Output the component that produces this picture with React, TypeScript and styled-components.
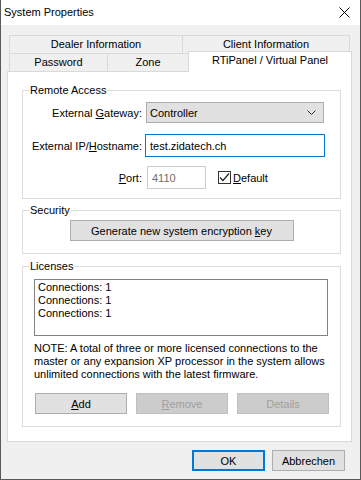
import React, { useState } from "react";
import styled, { createGlobalStyle } from "styled-components";

const GlobalStyle = createGlobalStyle`
  html, body {
    margin: 0;
    padding: 0;
    background: #ffffff;
  }
  body {
    font-family: "Liberation Sans", Arial, sans-serif;
    font-size: 11px;
    color: #000;
  }
  * {
    box-sizing: border-box;
  }
`;

const Window = styled.div`
  width: 361px;
  height: 480px;
  border: 1px solid #5a5a5a;
  border-top: none;
  background: #f0f0f0;
  display: flex;
  flex-direction: column;
`;

const TitleBar = styled.div`
  height: 25px;
  background: #ffffff;
  display: flex;
  align-items: center;
  justify-content: space-between;
  padding: 0 10px 1px 3px;
`;

const Title = styled.span`
  font-size: 11px;
  line-height: 16px;
`;

const Body = styled.div`
  padding: 10px 8px 0 6px;
  display: flex;
  flex-direction: column;
`;

const TabStrip = styled.div`
  padding-left: 2px;
  display: flex;
  flex-direction: column;
`;

const TabRow = styled.div`
  display: flex;
  height: 18px;
  align-items: flex-start;
`;

const Tab = styled.div<{ $w: number; $active?: boolean; $first?: boolean }>`
  width: ${(p) => p.$w}px;
  height: ${(p) => (p.$active ? 21 : 18)}px;
  margin-top: ${(p) => (p.$active ? -2 : 0)}px;
  margin-left: ${(p) => (p.$first ? 0 : -1)}px;
  border: 1px solid #d9d9d9;
  border-bottom: none;
  background: ${(p) => (p.$active ? "#ffffff" : "#f0f0f0")};
  position: relative;
  z-index: ${(p) => (p.$active ? 2 : 1)};
  text-align: center;
  line-height: 17px;
  white-space: nowrap;
`;

const Panel = styled.div`
  width: 345px;
  height: 371px;
  background: #ffffff;
  border: 1px solid #d9d9d9;
  padding: 10px 10px 0 14px;
  display: flex;
  flex-direction: column;
`;

const Group = styled.fieldset<{ $top?: number }>`
  margin: ${(p) => p.$top ?? 0}px 0 0 0;
  padding: 0;
  border: 1px solid #dcdcdc;
  min-width: 0;
`;

const Legend = styled.legend`
  margin-left: 6px;
  padding: 0 1px;
  line-height: 16px;
`;

const FormGrid = styled.div`
  display: grid;
  grid-template-columns: 119px auto;
  column-gap: 4px;
  align-items: center;
  padding: 4px 0 9px 0;
`;

const FieldLabel = styled.label<{ $mt?: number }>`
  text-align: right;
  white-space: nowrap;
  margin-top: ${(p) => p.$mt ?? 0}px;
`;

const Cell = styled.div<{ $mt?: number }>`
  display: flex;
  align-items: center;
  margin-top: ${(p) => p.$mt ?? 0}px;
`;

const Accel = styled.span`
  text-decoration: underline;
  text-underline-offset: 1px;
`;

const Select = styled.div`
  width: 178px;
  height: 21px;
  background: #e1e1e1;
  border: 1px solid #adadad;
  display: flex;
  align-items: center;
  justify-content: space-between;
  padding: 0 7px 0 3px;
`;

const TextInput = styled.div<{ $w: number; $shift?: number; $focus?: boolean; $disabled?: boolean }>`
  width: ${(p) => p.$w}px;
  height: 23px;
  margin-left: ${(p) => p.$shift ?? 0}px;
  border: 1px solid ${(p) => (p.$focus ? "#0078d7" : "#cccccc")};
  background: #ffffff;
  color: ${(p) => (p.$disabled ? "#6d6d6d" : "#000000")};
  display: flex;
  align-items: center;
  padding-left: 4px;
`;

const CheckWrap = styled.div`
  display: flex;
  align-items: center;
  margin-left: 12px;
  gap: 2px;
`;

const CheckBox = styled.div`
  width: 13px;
  height: 13px;
  border: 1px solid #333333;
  background: #ffffff;
  display: flex;
  align-items: center;
  justify-content: center;
`;

const Centered = styled.div`
  display: flex;
  justify-content: center;
  padding: 2px 0 12px 0;
`;

const Button = styled.button<{ $w: number; $disabled?: boolean; $default?: boolean }>`
  width: ${(p) => p.$w}px;
  height: 21px;
  padding: 0;
  font-family: inherit;
  font-size: 11px;
  background: ${(p) => (p.$disabled ? "#cccccc" : "#e1e1e1")};
  color: ${(p) => (p.$disabled ? "#a0a0a0" : "#000000")};
  border: ${(p) => (p.$default ? "2px solid #0078d7" : p.$disabled ? "1px solid #bfbfbf" : "1px solid #adadad")};
  line-height: 16px;
  cursor: default;
`;

const LicenseBody = styled.div`
  padding: 5px 0 12px 11px;
  display: flex;
  flex-direction: column;
`;

const ListBox = styled.div`
  width: 294px;
  height: 57px;
  border: 1px solid #828282;
  padding: 1px 3px;
  line-height: 13px;
`;

const Note = styled.p`
  margin: 6px 0 0 0;
  line-height: 13px;
  white-space: nowrap;
`;

const ButtonRow = styled.div`
  display: flex;
  gap: 9px;
  margin-top: 12px;
  padding-left: 1px;
`;

const Footer = styled.div`
  display: flex;
  justify-content: flex-end;
  gap: 7px;
  padding: 8px 7px 0 0;
`;

const CloseIcon = () => (
  <svg width="11" height="11" viewBox="0 0 11 11">
    <path d="M0.5 0.5 L10.5 10.5 M10.5 0.5 L0.5 10.5" stroke="#000" strokeWidth="1" fill="none" />
  </svg>
);

const Chevron = () => (
  <svg width="9" height="5" viewBox="0 0 9 5">
    <polyline points="0.5,0.5 4.5,4.5 8.5,0.5" stroke="#333" strokeWidth="1" fill="none" />
  </svg>
);

const Check = () => (
  <svg width="11" height="11" viewBox="0 0 11 11">
    <polyline points="1,5.5 4,8.5 10,1.5" stroke="#222" strokeWidth="1.2" fill="none" />
  </svg>
);

const App: React.FC = () => {
  const [checked] = useState(true);
  const licenses = ["Connections: 1", "Connections: 1", "Connections: 1"];

  return (
    <>
      <GlobalStyle />
      <Window>
        <TitleBar>
          <Title>System Properties</Title>
          <CloseIcon />
        </TitleBar>
        <Body>
          <TabStrip>
            <TabRow>
              <Tab $w={174} $first>Dealer Information</Tab>
              <Tab $w={168}>Client Information</Tab>
            </TabRow>
            <TabRow>
              <Tab $w={99} $first>Password</Tab>
              <Tab $w={82}>Zone</Tab>
              <Tab $w={164} $active>RTiPanel / Virtual Panel</Tab>
            </TabRow>
          </TabStrip>
          <Panel>
            <Group>
              <Legend>Remote Access</Legend>
              <FormGrid>
                <FieldLabel>
                  External <Accel>G</Accel>ateway:
                </FieldLabel>
                <Cell>
                  <Select>
                    <span>Controller</span>
                    <Chevron />
                  </Select>
                </Cell>
                <FieldLabel $mt={11}>
                  External IP/<Accel>H</Accel>ostname:
                </FieldLabel>
                <Cell $mt={11}>
                  <TextInput $w={180} $shift={-1} $focus>
                    test.zidatech.ch
                  </TextInput>
                </Cell>
                <FieldLabel $mt={9}>
                  <Accel>P</Accel>ort:
                </FieldLabel>
                <Cell $mt={9}>
                  <TextInput $w={59} $shift={1} $disabled>
                    4110
                  </TextInput>
                  <CheckWrap>
                    <CheckBox>{checked && <Check />}</CheckBox>
                    <span>
                      <Accel>D</Accel>efault
                    </span>
                  </CheckWrap>
                </Cell>
              </FormGrid>
            </Group>

            <Group $top={3}>
              <Legend>Security</Legend>
              <Centered>
                <Button $w={224}>
                  Generate new system encryption <Accel>k</Accel>ey
                </Button>
              </Centered>
            </Group>

            <Group $top={4}>
              <Legend>Licenses</Legend>
              <LicenseBody>
                <ListBox>
                  {licenses.map((l, i) => (
                    <div key={i}>{l}</div>
                  ))}
                </ListBox>
                <Note>
                  NOTE: A total of three or more licensed connections to the
                  <br />
                  master or any expansion XP processor in the system allows
                  <br />
                  unlimited connections with the latest firmware.
                </Note>
                <ButtonRow>
                  <Button $w={92}>
                    <Accel>A</Accel>dd
                  </Button>
                  <Button $w={92} $disabled>
                    <Accel>R</Accel>emove
                  </Button>
                  <Button $w={92} $disabled>
                    Details
                  </Button>
                </ButtonRow>
              </LicenseBody>
            </Group>
          </Panel>
          <Footer>
            <Button $w={73} $default>
              OK
            </Button>
            <Button $w={73}>Abbrechen</Button>
          </Footer>
        </Body>
      </Window>
    </>
  );
};

export default App;
